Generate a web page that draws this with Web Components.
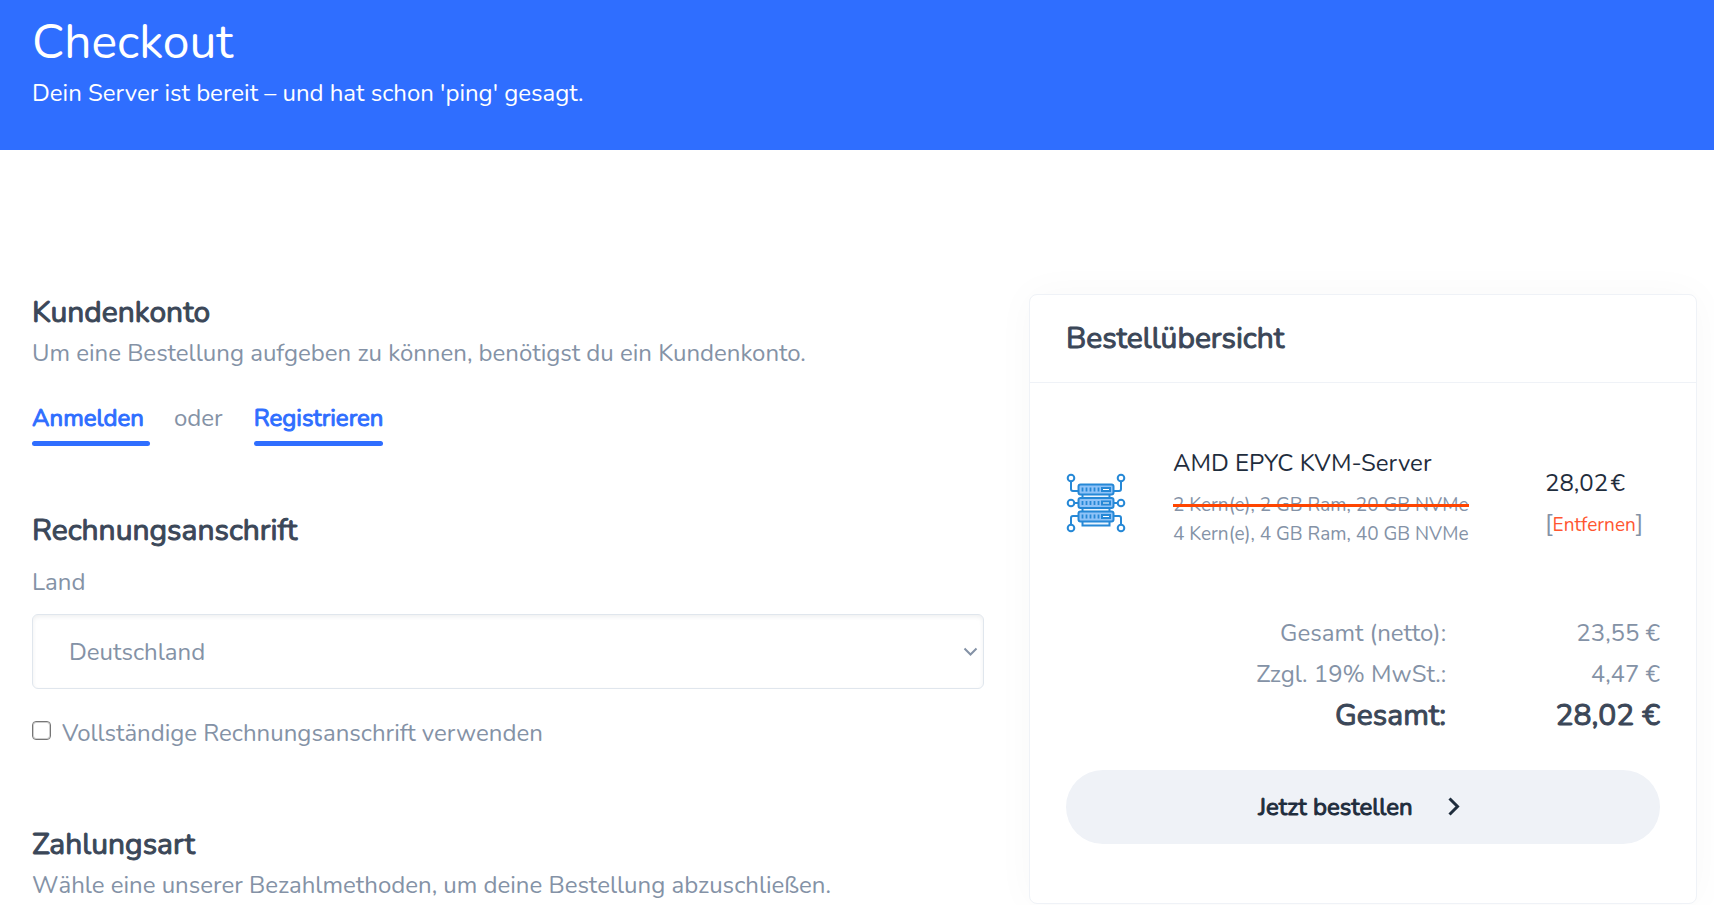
<!DOCTYPE html>
<html lang="de">
<head>
<meta charset="utf-8">
<meta name="viewport" content="width=device-width, initial-scale=1">
<title>Checkout</title>
<style>
  :root {
    --blue: #2f6eff;
    --heading: #3b4758;
    --ink: #1f2d3d;
    --muted: #8492a6;
    --line: #e0e6ed;
    --soft: #eff2f7;
    --danger: #ff4500;
  }
  body {
    margin: 0;
    background: #fff;
    color: var(--muted);
    font: 400 24px/40px Nunito, Lato, sans-serif;
  }
</style>
</head>
<body>
<checkout-page>
  <page-hero slot="hero" heading="Checkout">Dein Server ist bereit – und hat schon 'ping' gesagt.</page-hero>

  <form-section heading="Kundenkonto">
    <span slot="intro">Um eine Bestellung aufgeben zu können, benötigst du ein Kundenkonto.</span>
    <account-links></account-links>
  </form-section>
  <form-section heading="Rechnungsanschrift">
    <billing-address></billing-address>
  </form-section>
  <form-section heading="Zahlungsart">
    <span slot="intro">Wähle eine unserer Bezahlmethoden, um deine Bestellung abzuschließen.</span>
  </form-section>

  <order-summary slot="summary" heading="Bestellübersicht">
    <order-item>
      <server-icon slot="icon"></server-icon>
      <span slot="name">AMD EPYC KVM-Server</span>
      <span slot="old">2 Kern(e), 2 GB Ram, 20 GB NVMe</span>
      <span slot="spec">4 Kern(e), 4 GB Ram, 40 GB NVMe</span>
      <span slot="price">28,02&#8202;€</span>
    </order-item>
    <order-totals></order-totals>
    <order-button>Jetzt bestellen</order-button>
  </order-summary>
</checkout-page>

<script>
const base = `<style>
  * { box-sizing: border-box; }
  :host { display: block; }
  h1, h2, p { margin: 0; }
  h2 { font-size: 30px; color: var(--heading); }
  .strong { font-weight: 400; -webkit-text-stroke: 1px currentColor; }
</style>`;
const define = (name, html, setup) => {
  const template = document.createElement('template');
  template.innerHTML = base + html;
  customElements.define(name, class extends HTMLElement {
    constructor() {
      super();
      this.attachShadow({ mode: 'open' }).append(template.content.cloneNode(true));
    }
    connectedCallback() { if (setup) setup(this, this.shadowRoot); }
  });
};
const setHeading = (host, root) => {
  root.querySelector('h1, h2').textContent = host.getAttribute('heading');
};

define('checkout-page', `
  <style>
    main {
      display: grid;
      grid-template-columns: minmax(0, 952fr) minmax(0, 668fr);
      column-gap: 45px;
      align-items: start;
      padding: 143px 17px 0 32px;
    }
    aside { padding-top: 1px; }
    @media (max-width: 1100px) { main { grid-template-columns: minmax(0, 1fr); row-gap: 40px; } }
  </style>
  <slot name="hero"></slot>
  <main>
    <div><slot></slot></div>
    <aside><slot name="summary"></slot></aside>
  </main>`);

define('page-hero', `
  <style>
    header { background: var(--blue); color: #fff; padding: 14px 32px 37px; }
    h1 { font-size: 48px; line-height: 56px; font-weight: 400; }
    p { margin-top: 3px; }
  </style>
  <header><h1></h1><p><slot></slot></p></header>`, setHeading);

define('form-section', `
  <style>
    :host(:nth-of-type(n+2)) { padding-top: 65px; }
    :host(:last-of-type) { padding-top: 72px; }
  </style>
  <section><h2 class="strong"></h2><p><slot name="intro"></slot></p><slot></slot></section>`, setHeading);

define('account-links', `
  <style>
    :host { display: flex; align-items: flex-start; padding-top: 25px; }
    span { padding: 0 31px 0 24px; }
    a { color: var(--blue); text-decoration: none; }
    a::after { content: ""; display: block; height: 5px; margin-top: 3px; border-radius: 3px; background: var(--blue); }
    .login { min-width: 118px; }
  </style>
  <a class="strong login" href="#anmelden">Anmelden</a><span>oder</span><a class="strong" href="#registrieren">Registrieren</a>`);

define('billing-address', `
  <style>
    :host { padding-top: 11px; }
    .field { display: grid; grid-template-columns: minmax(0, 1fr); row-gap: 12px; }
    .box { display: grid; align-items: center; }
    select, .box svg { grid-area: 1 / 1; }
    select {
      appearance: none; width: 100%; height: 75px; margin: 0; padding: 0 36px;
      border: 1px solid var(--line); border-radius: 6px; background: #fff;
      box-shadow: inset 0 2px 4px rgba(31, 45, 61, .07);
      color: inherit; font: inherit;
    }
    .box svg { justify-self: end; margin-right: 6px; pointer-events: none; }
    .check { display: flex; align-items: flex-start; gap: 11px; padding-top: 24px; }
    input { flex: none; appearance: none; width: 19px; height: 19px; margin: 8px 0 0; border: 1px solid #767676; border-radius: 4px; background: #fff; outline: 1px solid rgba(118, 118, 118, .35); outline-offset: -2px; }
    input:checked { background: var(--blue); border-color: var(--blue); }
  </style>
  <div class="field">
    <label for="country">Land</label>
    <div class="box">
      <select id="country"><option>Deutschland</option><option>Österreich</option><option>Schweiz</option></select>
      <svg width="15" height="10" viewBox="0 0 15 10" fill="none" stroke="#8492a6" stroke-width="2" aria-hidden="true"><path d="M1.500 1.500 7.500 7.500l6-6"/></svg>
    </div>
  </div>
  <div class="check">
    <input type="checkbox" id="full"><label for="full">Vollständige Rechnungsanschrift verwenden</label>
  </div>`);

define('order-summary', `
  <style>
    section { border: 1px solid var(--soft); border-radius: 8px; background: #fff; box-shadow: 0 0 40px rgba(31, 45, 61, .03); }
    header { padding: 24px 36px 23px; border-bottom: 1px solid var(--soft); }
    .body { padding: 60px 36px 59px; }
  </style>
  <section><header><h2 class="strong"></h2></header><div class="body"><slot></slot></div></section>`, setHeading);

define('order-item', `
  <style>
    :host { display: grid; grid-template-columns: 107px minmax(0, 1fr) 115px; align-items: start; }
    .icon { padding-top: 30px; }
    .name, .price { color: var(--ink); }
    .specs { padding-top: 8px; font-size: 19px; line-height: 29px; }
    del { display: table; position: relative; text-decoration: none; }
    del::after { content: ""; position: absolute; left: 0; right: 0; top: 13px; height: 3px; background: var(--danger); }
    .cost { padding-top: 20px; white-space: nowrap; }
    a { font-size: 19px; color: #ff5630; text-decoration: none; }
  </style>
  <div class="icon"><slot name="icon"></slot></div>
  <div>
    <p class="name"><slot name="name"></slot></p>
    <div class="specs"><del><slot name="old"></slot></del><slot name="spec"></slot></div>
  </div>
  <div class="cost">
    <p class="price"><slot name="price"></slot></p>
    <p>[<a href="#entfernen">Entfernen</a>]</p>
  </div>`);

define('server-icon', `
  <style>svg { display: block; }</style>
  <svg width="60" height="62" viewBox="0 0 60 62" fill="none" stroke="#2688d6" stroke-width="2" role="img" aria-label="Server">
    <path d="M5 9v7q0 2 2 2h6M55 9v7q0 2-2 2h-6M8 30h5M52 30h-5M5 52v-7q0-2 2-2h6M55 52v-7q0-2-2-2h-6"/>
    <g fill="#fff"><circle cx="5" cy="5" r="3.300"/><circle cx="55" cy="5" r="3.300"/><circle cx="5" cy="30" r="3.300"/><circle cx="55" cy="30" r="3.300"/><circle cx="5" cy="55" r="3.300"/><circle cx="55" cy="55" r="3.300"/></g>
    <path d="M16.500 20v32.500h27V20" fill="#eaf4fe"/>
    <g fill="#8fc3f8"><rect x="12.500" y="11.500" width="35" height="10" rx="2"/><rect x="12.500" y="25" width="35" height="10" rx="2"/><rect x="12.500" y="38.500" width="35" height="10" rx="2"/></g>
    <path d="M16.500 14.500v4m4-4v4m4-4v4m4-4v4m4-4v4M16.500 28v4m4-4v4m4-4v4m4-4v4m4-4v4M16.500 41.500v4m4-4v4m4-4v4m4-4v4m4-4v4" stroke-width="1.800"/>
    <g fill="#fff"><path d="M36 15h8v3h-8zM36 28.500h8v3h-8zM36 42h8v3h-8z"/></g>
  </svg>`);

define('order-totals', `
  <style>
    :host { padding-top: 64px; }
    table { width: 100%; border-collapse: collapse; table-layout: fixed; line-height: 41px; text-align: right; }
    th, td { padding: 0; font-weight: 400; }
    td { width: 36%; }
    .sum { font-size: 30px; color: var(--heading); }
  </style>
  <table>
    <tr><th scope="row">Gesamt (netto):</th><td>23,55 €</td></tr>
    <tr><th scope="row">Zzgl. 19% MwSt.:</th><td>4,47 €</td></tr>
    <tr class="strong sum"><th scope="row">Gesamt:</th><td>28,02 €</td></tr>
  </table>`);

define('order-button', `
  <style>
    :host { padding-top: 34px; }
    button {
      display: flex; align-items: center; justify-content: center; gap: 35px;
      width: 100%; height: 74px; padding: 0 8px 0 0; border: 0; border-radius: 37px;
      background: var(--soft); color: var(--ink); font: inherit; cursor: pointer;
    }
  </style>
  <button type="button"><span class="strong"><slot></slot></span>
    <svg width="12" height="20" viewBox="0 0 12 20" fill="none" stroke="#1f2d3d" stroke-width="3" aria-hidden="true"><path d="M1.500 1.500 9.500 9.500l-8 8"/></svg>
  </button>`);
</script>
</body>
</html>
